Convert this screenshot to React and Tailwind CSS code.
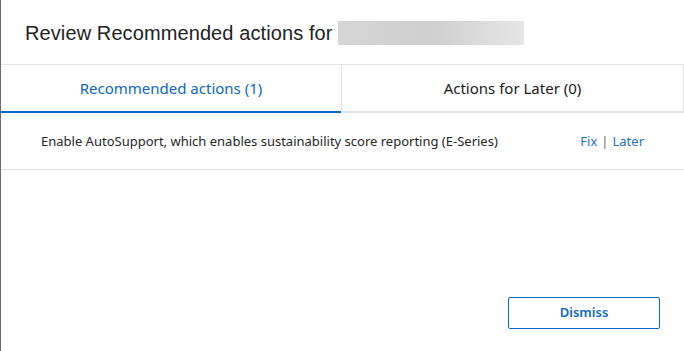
export default function App() {
  return (
    <div className="w-[684px] h-[351px] bg-[#6b6b6b] pl-px overflow-hidden">
      <div
        className="w-[683px] h-[351px] bg-white flex flex-col text-[#222]"
        style={{ fontFamily: '"Segoe UI", "Noto Sans", "Open Sans", sans-serif' }}
      >
        {/* Header */}
        <div className="h-[64px] flex items-center pl-[24px] pt-[2px]">
          <h2 className="text-[20px] tracking-[0.1px] text-[#222] font-['Liberation_Sans',Arial,sans-serif]">
            Review Recommended actions for
          </h2>
          <div className="ml-[5px] w-[186px] h-[24px] bg-gradient-to-r from-[#d6d6d6] via-[#cfcfcf] to-[#e6e6e6]" />
        </div>

        {/* Tabs */}
        <div className="flex h-[49px] border-t border-[#e3e3e6] border-r">
          <div className="w-[340px] flex items-center justify-center border-b-2 border-[#0b67c2] text-[#0b67c2] text-[15px]">
            Recommended actions (1)
          </div>
          <div className="flex-1 flex items-center justify-center border-l border-[#e3e3e3] border-b-2 border-b-[#e3e3e3] text-[15px] text-[#1a1a1a]">
            Actions for Later (0)
          </div>
        </div>

        {/* Row */}
        <div className="h-[57px] flex items-center pl-[40px] pr-[40px] pt-[2px] border-b border-[#e0e0e0] text-[13px]">
          <span className="flex-1 text-[#262626]">
            Enable AutoSupport, which enables sustainability score reporting (E-Series)
          </span>
          <span className="text-[#1b72c4]">Fix</span>
          <span className="mx-[4px] text-[#666]">|</span>
          <span className="text-[#1b72c4]">Later</span>
        </div>

        <div className="flex-1" />

        {/* Footer */}
        <div className="flex justify-end pr-[24px] pb-[22px]">
          <button className="w-[152px] h-[32px] border border-[#0b67c2] rounded-[2px] text-[#0b67c2] text-[13px] font-semibold">
            Dismiss
          </button>
        </div>
      </div>
    </div>
  );
}
